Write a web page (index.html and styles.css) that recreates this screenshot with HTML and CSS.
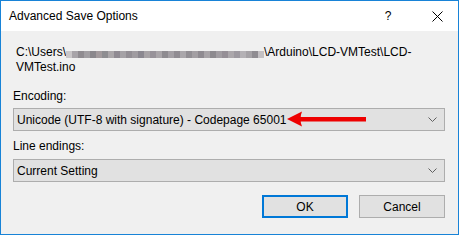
FILE: index.html
```html
<!DOCTYPE html>
<html>
<head>
<meta charset="utf-8">
<link rel="stylesheet" href="styles.css">
</head>
<body>
<div class="window">
  <div class="titlebar">
    <span class="title">Advanced Save Options</span>
    <span class="help">?</span>
    <span class="close"><svg width="11" height="11" viewBox="0 0 11 11"><path d="M0.5 0.5 L10.5 10.5 M10.5 0.5 L0.5 10.5" stroke="#000" stroke-width="1" fill="none"/></svg></span>
  </div>
  <div class="body">
    <div class="path">C:\Users\<span class="mosaic"><i style="background:#c9c6c8"></i><i style="background:#a7a3a8"></i><i style="background:#8f8b90"></i><i style="background:#a19ea2"></i><i style="background:#8a878c"></i><i style="background:#a29a9d"></i><i style="background:#8e8d91"></i><i style="background:#aaa6a9"></i><i style="background:#8f8a92"></i><i style="background:#a5a2a6"></i><i style="background:#938f95"></i><i style="background:#a09ca1"></i><i style="background:#8b8890"></i><i style="background:#a7a3a6"></i><i style="background:#979299"></i><i style="background:#a9a5a9"></i><i style="background:#8e8b90"></i><i style="background:#a39fa4"></i><i style="background:#908c92"></i><i style="background:#aaa7ab"></i><i style="background:#928f94"></i><i style="background:#a39fa3"></i><i style="background:#8f8b91"></i><i style="background:#a8a4a8"></i><i style="background:#8d8a8f"></i><i style="background:#a19da2"></i><i style="background:#958f96"></i><i style="background:#aba7ab"></i><i style="background:#9d99a0"></i><i style="background:#b4b1b5"></i><i style="background:#a5a2a6"></i><i style="background:#8f8c91"></i><i style="background:#c3c0c3"></i></span>\Arduino\LCD-VMTest\LCD-<br>VMTest.ino</div>
    <div class="label">Encoding:</div>
    <div class="combo">
      <span class="value">Unicode (UTF-8 with signature) - Codepage 65001</span>
      <svg class="chev" width="9" height="5" viewBox="0 0 9 5"><path d="M0.5 0.5 L4.5 4.5 L8.5 0.5" stroke="#606060" stroke-width="1" fill="none"/></svg>
      <svg class="arrow" width="80" height="16" viewBox="0 0 80 16"><path d="M0 8 L15 0.5 Q12 8 15 15.5 Z" fill="#ee0000"/><rect x="13" y="6" width="66" height="4.5" fill="#ee0000"/></svg>
    </div>
    <div class="label second">Line endings:</div>
    <div class="combo">
      <span class="value">Current Setting</span>
      <svg class="chev" width="9" height="5" viewBox="0 0 9 5"><path d="M0.5 0.5 L4.5 4.5 L8.5 0.5" stroke="#606060" stroke-width="1" fill="none"/></svg>
    </div>
    <div class="buttons">
      <div class="btn ok">OK</div>
      <div class="btn">Cancel</div>
    </div>
  </div>
</div>
</body>
</html>
```
FILE: styles.css
```css
html, body {
  margin: 0;
  padding: 0;
}
body {
  font-family: "Liberation Sans", Arial, sans-serif;
  font-size: 12px;
  color: #000;
  background: #f0f0f0;
}
.window {
  width: 459px;
  height: 235px;
  box-sizing: border-box;
  border: 1px solid #1883d7;
  background: #f0f0f0;
  display: flex;
  flex-direction: column;
}
.titlebar {
  height: 30px;
  background: #fff;
  display: flex;
  align-items: center;
  padding-left: 8px;
  flex-shrink: 0;
}
.title {
  flex: 1;
  font-size: 12px;
}
.help {
  width: 14px;
  text-align: center;
  margin-right: 37px;
  font-size: 12px;
}
.close {
  display: flex;
  margin-right: 15px;
}
.body {
  padding: 14px 13px 0 12px;
  display: flex;
  flex-direction: column;
}
.path {
  line-height: 15px;
  margin-left: 3px;
  white-space: nowrap;
}
.mosaic {
  display: inline-flex;
  vertical-align: -2px;
  height: 7px;
}
.mosaic i {
  display: block;
  width: 6px;
  height: 7px;
}
.label {
  line-height: 15px;
  margin-top: 14px;
  margin-bottom: 4px;
}
.label.second {
  margin-top: 8px;
  margin-bottom: 5px;
}
.combo {
  position: relative;
  height: 23px;
  box-sizing: border-box;
  border: 1px solid #adadad;
  background: #e1e1e1;
  display: flex;
  align-items: center;
  padding: 0 7px 0 3px;
}
.combo .value {
  flex: 1;
}
.chev {
  display: block;
}
.arrow {
  position: absolute;
  left: 273px;
  top: 2px;
}
.buttons {
  display: flex;
  justify-content: flex-end;
  gap: 11px;
  margin-top: 13px;
}
.btn {
  width: 86px;
  height: 23px;
  box-sizing: border-box;
  border: 1px solid #adadad;
  background: #e1e1e1;
  display: flex;
  align-items: center;
  justify-content: center;
}
.btn.ok {
  border: 2px solid #0078d7;
}
```
